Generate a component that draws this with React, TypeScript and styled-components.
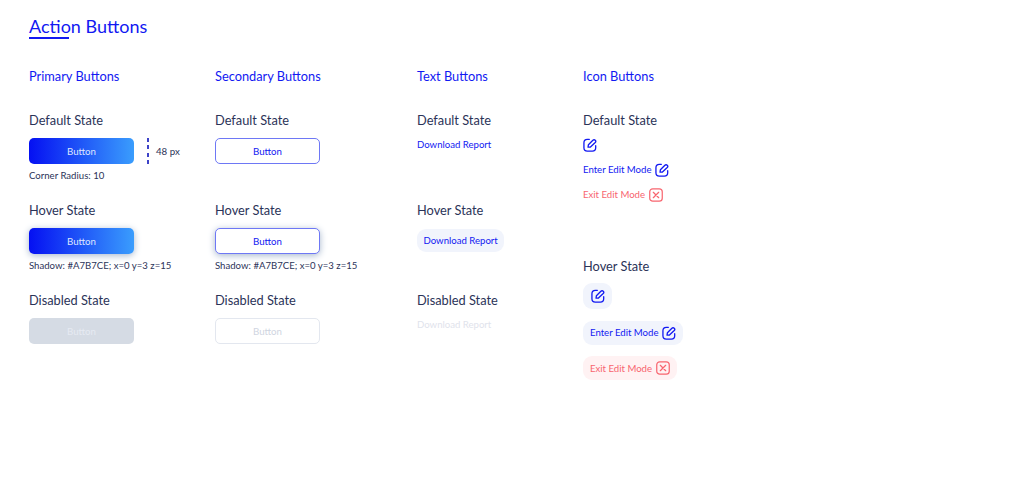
import React from 'react';
import styled, { createGlobalStyle } from 'styled-components';

const blue = '#1219f2';
const ink = '#2b3358';
const red = '#f8656f';

const GlobalStyle = createGlobalStyle`
  html, body {
    margin: 0;
    background: #fff;
    font-family: Lato, 'Noto Sans', sans-serif;
  }
`;

const EditIcon = () => (
  <svg width="14" height="14" viewBox="0 0 15 15" fill="none" stroke="currentColor" strokeWidth="1.4" strokeLinecap="round" strokeLinejoin="round">
    <path d="M6.8 1.4H4.6C2.4 1.4 1 2.8 1 5v5.4C1 12.6 2.4 14 4.6 14h5.4c2.2 0 3.6-1.4 3.6-3.6V8.2" />
    <path d="M5.4 9.8l.4-2.6 4.8-4.8c.7-.7 1.8-.7 2.5 0s.7 1.8 0 2.5L8 9.7l-2.6.1z" />
  </svg>
);

const ExitIcon = () => (
  <svg width="14" height="14" viewBox="0 0 15 15" fill="none" stroke="currentColor" strokeWidth="1.3" strokeLinecap="round" strokeLinejoin="round">
    <rect x="0.8" y="0.9" width="13.4" height="13.2" rx="3.2" />
    <path d="M4.6 4.6l5.8 5.8M10.4 4.6l-5.8 5.8" />
  </svg>
);

const App = () => (
  <Page>
    <GlobalStyle />
    <Title>Action Buttons</Title>
    <Columns>
      <Column>
        <Heading>Primary Buttons</Heading>
        <StateBlock>
          <StateLabel>Default State</StateLabel>
          <MeasureRow>
            <PrimaryButton>Button</PrimaryButton>
            <MeasureLine />
            <MeasureText>48 px</MeasureText>
          </MeasureRow>
          <Caption>Corner Radius: 10</Caption>
        </StateBlock>
        <StateBlock>
          <StateLabel>Hover State</StateLabel>
          <PrimaryButton $hover>Button</PrimaryButton>
          <Caption>Shadow: #A7B7CE; x=0 y=3 z=15</Caption>
        </StateBlock>
        <StateBlock>
          <StateLabel>Disabled State</StateLabel>
          <PrimaryButton $disabled>Button</PrimaryButton>
        </StateBlock>
      </Column>

      <Column>
        <Heading>Secondary Buttons</Heading>
        <StateBlock>
          <StateLabel>Default State</StateLabel>
          <SecondaryButton>Button</SecondaryButton>
        </StateBlock>
        <StateBlock>
          <StateLabel>Hover State</StateLabel>
          <SecondaryButton $hover>Button</SecondaryButton>
          <Caption>Shadow: #A7B7CE; x=0 y=3 z=15</Caption>
        </StateBlock>
        <StateBlock>
          <StateLabel>Disabled State</StateLabel>
          <SecondaryButton $disabled>Button</SecondaryButton>
        </StateBlock>
      </Column>

      <Column>
        <Heading>Text Buttons</Heading>
        <StateBlock>
          <StateLabel>Default State</StateLabel>
          <TextButton>Download Report</TextButton>
        </StateBlock>
        <StateBlock>
          <StateLabel>Hover State</StateLabel>
          <TextButton $hover>Download Report</TextButton>
        </StateBlock>
        <StateBlock>
          <StateLabel>Disabled State</StateLabel>
          <TextButton $disabled>Download Report</TextButton>
        </StateBlock>
      </Column>

      <Column>
        <Heading>Icon Buttons</Heading>
        <IconDefaultBlock>
          <StateLabel>Default State</StateLabel>
          <IconStack>
            <IconOnly><EditIcon /></IconOnly>
            <IconText>Enter Edit Mode <EditIcon /></IconText>
            <IconText $danger>Exit Edit Mode <ExitIcon /></IconText>
          </IconStack>
        </IconDefaultBlock>
        <StateBlock>
          <StateLabel>Hover State</StateLabel>
          <HoverStack>
            <IconOnly $hover><EditIcon /></IconOnly>
            <IconText $hover>Enter Edit Mode <EditIcon /></IconText>
            <IconText $hover $danger>Exit Edit Mode <ExitIcon /></IconText>
          </HoverStack>
        </StateBlock>
      </Column>
    </Columns>
  </Page>
);

const Page = styled.div`
  width: 1024px;
  height: 501px;
  box-sizing: border-box;
  padding: 14px 0 0 29px;
  overflow: hidden;
`;

const Title = styled.h1`
  position: relative;
  margin: 0;
  font-size: 18px;
  line-height: 25px;
  font-weight: 400;
  color: ${blue};

  &::after {
    content: '';
    position: absolute;
    left: 0;
    top: 23px;
    width: 40px;
    height: 2px;
    background: ${blue};
  }
`;

const Columns = styled.div`
  display: grid;
  grid-template-columns: 186px 202px 166px 200px;
  margin-top: 28px;
`;

const Column = styled.div`
  display: flex;
  flex-direction: column;
`;

const Heading = styled.h2`
  margin: 0 0 25px;
  font-size: 12.8px;
  line-height: 19px;
  font-weight: 400;
  color: ${blue};
`;

const StateBlock = styled.div`
  height: 90px;
  display: flex;
  flex-direction: column;
  align-items: flex-start;
`;

const IconDefaultBlock = styled(StateBlock)`
  height: 146px;
`;

const StateLabel = styled.div`
  margin-bottom: 8px;
  font-size: 12.8px;
  line-height: 19px;
  color: ${ink};
`;

const MeasureRow = styled.div`
  display: flex;
  align-items: center;
`;

const MeasureLine = styled.span`
  width: 2px;
  height: 26px;
  margin-left: 13px;
  background: repeating-linear-gradient(180deg, #3d43c8 0 4px, transparent 4px 7.3px);
`;

const MeasureText = styled.span`
  margin-left: 7px;
  font-size: 9.7px;
  color: ${ink};
`;

const Caption = styled.div`
  margin-top: 5px;
  font-size: 9.6px;
  line-height: 14px;
  color: ${ink};
`;

const BaseButton = styled.button`
  width: 105px;
  height: 26px;
  box-sizing: border-box;
  padding: 0;
  border-radius: 5px;
  font-family: inherit;
  font-size: 9.7px;
`;

const PrimaryButton = styled(BaseButton)<{ $hover?: boolean; $disabled?: boolean }>`
  border: none;
  color: ${p => (p.$disabled ? '#e6eaf2' : '#dfe6ff')};
  background: ${p => (p.$disabled ? '#d5dbe4' : 'linear-gradient(90deg, #0510f2, #3a9dfd)')};
  box-shadow: ${p => (p.$hover ? '0 1.5px 7.5px #a7b7ce' : 'none')};
`;

const SecondaryButton = styled(BaseButton)<{ $hover?: boolean; $disabled?: boolean }>`
  background: #fff;
  border: ${p => (p.$hover ? '1.5px' : '1px')} solid ${p => (p.$disabled ? '#e3e7ef' : '#6e78f5')};
  color: ${p => (p.$disabled ? '#cfd5e1' : blue)};
  box-shadow: ${p => (p.$hover ? '0 1.5px 7.5px #a7b7ce' : 'none')};
`;

const TextButton = styled.div<{ $hover?: boolean; $disabled?: boolean }>`
  box-sizing: border-box;
  height: ${p => (p.$hover ? '23px' : '14px')};
  padding: ${p => (p.$hover ? '0 6.5px' : '0')};
  margin-top: ${p => (p.$hover ? '1px' : '-1px')};
  border-radius: 9px;
  display: flex;
  align-items: center;
  font-size: 9.6px;
  color: ${p => (p.$disabled ? '#dfe3ec' : blue)};
  background: ${p => (p.$hover ? '#f1f4fc' : 'transparent')};
`;

const IconStack = styled.div`
  display: flex;
  flex-direction: column;
  align-items: flex-start;
  gap: 10px;
  margin-top: -1px;
`;

const HoverStack = styled(IconStack)`
  gap: 11.5px;
`;

const IconOnly = styled.div<{ $hover?: boolean }>`
  display: flex;
  align-items: center;
  justify-content: center;
  color: ${blue};
  border-radius: 9px;
  background: ${p => (p.$hover ? '#f1f4fc' : 'transparent')};
  width: ${p => (p.$hover ? '29px' : '14px')};
  height: ${p => (p.$hover ? '26px' : '15px')};
`;

const IconText = styled.div<{ $hover?: boolean; $danger?: boolean }>`
  display: flex;
  align-items: center;
  gap: 4px;
  font-size: 9.6px;
  height: ${p => (p.$hover ? '24px' : '15px')};
  padding: ${p => (p.$hover ? '0 7px' : '0')};
  border-radius: 9px;
  color: ${p => (p.$danger ? red : blue)};
  background: ${p => (!p.$hover ? 'transparent' : p.$danger ? '#fff2f3' : '#f1f4fc')};
`;

export default App;
